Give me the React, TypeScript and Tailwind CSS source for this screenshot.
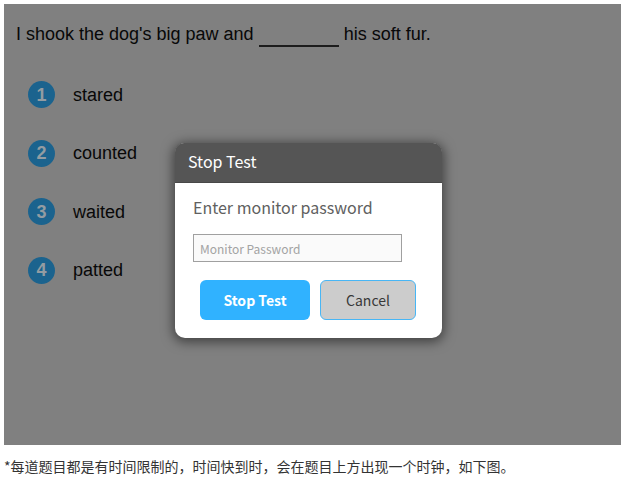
const answers = ['stared', 'counted', 'waited', 'patted'];

function Question() {
  return (
    <section className="font-['Liberation_Sans',sans-serif] text-lg leading-6 text-[#080808]">
      <p className="pl-3 pt-[18px]">
        I shook the dog's big paw and{' '}
        <span className="inline-block h-[18px] w-20 border-b-2 border-[#1c1c1c] align-[-7px]" />{' '}
        his soft fur.
      </p>
      <ol className="ml-6 mt-[34px] flex h-[203px] flex-col justify-between">
        {answers.map((answer, index) => (
          <li key={answer}>
            <button type="button" className="flex items-center gap-[18px]">
              <span className="flex size-[27px] items-center justify-center rounded-full bg-[#1b638e] font-bold text-[#939ca2]">
                {index + 1}
              </span>
              <span>{answer}</span>
            </button>
          </li>
        ))}
      </ol>
    </section>
  );
}

function StopTestDialog() {
  return (
    <form
      role="dialog"
      aria-labelledby="dialog-title"
      onSubmit={(event) => event.preventDefault()}
      className="w-[267px] rounded-[10px] bg-white font-['Noto_Sans_CJK_SC',sans-serif] shadow-[0_2px_12px_2px_rgba(0,0,0,0.5)]"
    >
      <h2
        id="dialog-title"
        className="h-10 rounded-t-[9px] border-b border-[#484848] bg-[#555555] px-[13px] text-base leading-9 text-white"
      >
        Stop Test
      </h2>
      <div className="px-[18px] pb-[18px] pt-[10px]">
        <label htmlFor="password" className="block text-base leading-7 text-[#606060]">
          Enter monitor password
        </label>
        <input
          id="password"
          type="password"
          placeholder="Monitor Password"
          className="mt-[13px] block h-7 w-[209px] border border-[#a0a0a0] bg-[#fafafa] px-[6px] text-xs text-[#444444] outline-none placeholder:text-[#a3a3a3]"
        />
        <div className="mt-[18px] flex gap-[10px] px-[7px]">
          <button type="submit" className="h-10 w-[110px] rounded-md bg-[#30b2ff] text-sm font-bold text-white">
            Stop Test
          </button>
          <button
            type="button"
            className="h-10 w-24 rounded-md border border-[#48b6f5] bg-[#cccccc] text-sm text-[#383838]"
          >
            Cancel
          </button>
        </div>
      </div>
    </form>
  );
}

export default function App() {
  return (
    <main className="bg-white pb-1 pl-1 pr-[2px] pt-1">
      <div className="relative min-h-[441px] bg-[#808080]">
        <Question />
        <div className="absolute inset-x-0 top-[139px] flex justify-center pr-2">
          <StopTestDialog />
        </div>
      </div>
      <p className="mt-[11px] font-['Noto_Sans_CJK_SC',sans-serif] text-sm leading-5 text-[#333333]">
        *每道题目都是有时间限制的，时间快到时，会在题目上方出现一个时钟，如下图。
      </p>
    </main>
  );
}
